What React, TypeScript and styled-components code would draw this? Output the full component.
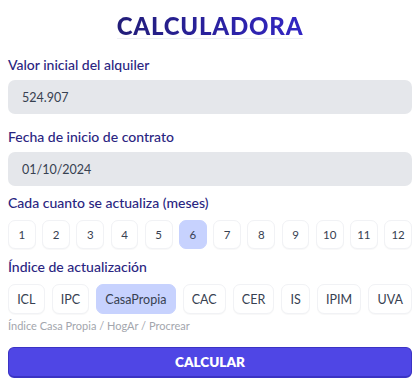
import React, { useState } from "react";
import styled, { createGlobalStyle } from "styled-components";

const GlobalStyle = createGlobalStyle`
  * { box-sizing: border-box; }
  body {
    margin: 0;
    background: #ffffff;
    font-family: Lato, "Noto Sans", "Liberation Sans", sans-serif;
  }
`;

const MONTHS = [1, 2, 3, 4, 5, 6, 7, 8, 9, 10, 11, 12];
const INDICES = ["ICL", "IPC", "CasaPropia", "CAC", "CER", "IS", "IPIM", "UVA"];

const Page = styled.div`
  padding: 0 8px;
  display: flex;
  flex-direction: column;
`;

const TitleWrap = styled.div`
  display: flex;
  justify-content: center;
  padding-top: 14px;
`;

const Title = styled.h1`
  margin: 0;
  font-size: 24px;
  line-height: 24px;
  font-weight: 900;
  letter-spacing: 0.8px;
  background: linear-gradient(90deg, #221d78, #3226c4);
  -webkit-background-clip: text;
  background-clip: text;
  color: transparent;
  border-bottom: 1px solid #eef0f5;
`;

const Label = styled.label<{ $top: number; $gap: number }>`
  display: block;
  margin-top: ${(p) => p.$top}px;
  margin-bottom: ${(p) => p.$gap}px;
  font-size: 14px;
  line-height: 20px;
  font-weight: 500;
  color: #2a2581;
`;

const Input = styled.input`
  width: 100%;
  height: 34px;
  border: none;
  outline: none;
  border-radius: 7px;
  background: #e5e7eb;
  padding: 0 14px;
  font-family: inherit;
  font-size: 12.5px;
  color: #374151;
`;

const Row = styled.div<{ $gap: number }>`
  display: flex;
  gap: ${(p) => p.$gap}px;
`;

const Chip = styled.button<{
  $active: boolean;
  $h: number;
  $size: number;
  $equal?: boolean;
}>`
  flex: ${(p) => (p.$equal ? "1 1 0" : "1 1 auto")};
  min-width: 0;
  height: ${(p) => p.$h}px;
  padding: 0 ${(p) => (p.$equal ? 0 : 6)}px;
  border-radius: 7px;
  border: 1px solid ${(p) => (p.$active ? "#c7d2fe" : "#f1f2f5")};
  background: ${(p) => (p.$active ? "#c7d2fe" : "#ffffff")};
  box-shadow: ${(p) => (p.$active ? "none" : "0 1px 1px rgba(0,0,0,0.03)")};
  font-family: inherit;
  font-size: ${(p) => p.$size}px;
  color: #374151;
  cursor: pointer;
`;

const Helper = styled.p`
  margin: 5px 0 0;
  font-size: 11px;
  line-height: 14px;
  color: #a3a6ad;
`;

const Submit = styled.button`
  margin-top: 14px;
  height: 31px;
  width: 100%;
  border-radius: 6px;
  border: 1px solid #3b33c4;
  border-bottom-width: 2px;
  background: #4f46e5;
  color: #ffffff;
  font-family: inherit;
  font-size: 13.5px;
  font-weight: 800;
  cursor: pointer;
`;

export default function App() {
  const [month, setMonth] = useState(6);
  const [index, setIndex] = useState("CasaPropia");
  return (
    <>
      <GlobalStyle />
      <Page>
        <TitleWrap>
          <Title>CALCULADORA</Title>
        </TitleWrap>

        <Label $top={16} $gap={5}>Valor inicial del alquiler</Label>
        <Input defaultValue="524.907" />

        <Label $top={13} $gap={5}>Fecha de inicio de contrato</Label>
        <Input defaultValue="01/10/2024" />

        <Label $top={7} $gap={7}>Cada cuanto se actualiza (meses)</Label>
        <Row $gap={6.5}>
          {MONTHS.map((m) => (
            <Chip
              key={m}
              $active={m === month}
              $h={29}
              $size={11.5}
              $equal
              onClick={() => setMonth(m)}
            >
              {m}
            </Chip>
          ))}
        </Row>

        <Label $top={8} $gap={7}>Índice de actualización</Label>
        <Row $gap={7}>
          {INDICES.map((i) => (
            <Chip
              key={i}
              $active={i === index}
              $h={30}
              $size={12.5}
              onClick={() => setIndex(i)}
            >
              {i}
            </Chip>
          ))}
        </Row>
        <Helper>Índice Casa Propia / HogAr / Procrear</Helper>

        <Submit>CALCULAR</Submit>
      </Page>
    </>
  );
}
